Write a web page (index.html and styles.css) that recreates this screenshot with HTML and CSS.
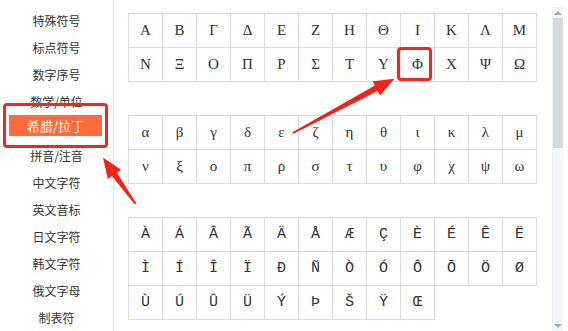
FILE: index.html
```html
<!DOCTYPE html>
<html lang="zh">
<head>
    <meta charset="UTF-8">
    <title>特殊符号</title>
    <link rel="stylesheet" href="styles.css">
</head>
<body>
    <div class="page">
        <ul class="sidebar">
            <li class="item">特殊符号</li>
            <li class="item">标点符号</li>
            <li class="item">数字序号</li>
            <li class="item">数学/单位</li>
            <li class="item active"><span>希腊/拉丁</span></li>
            <li class="item">拼音/注音</li>
            <li class="item">中文字符</li>
            <li class="item">英文音标</li>
            <li class="item">日文字符</li>
            <li class="item">韩文字符</li>
            <li class="item">俄文字母</li>
            <li class="item">制表符</li>
        </ul>

        <div class="main">
            <div class="grid" id="upper"></div>
            <div class="grid" id="lower"></div>
            <div class="grid latin" id="latin"></div>
        </div>

        <div class="scrollbar">
            <div class="sb-up"></div>
            <div class="sb-thumb"></div>
            <div class="sb-track"></div>
            <div class="sb-down"></div>
        </div>

        <!-- 标注 -->
        <div class="mark mark-side"></div>
        <div class="mark mark-phi"></div>
        <svg class="arrows" width="568" height="331" viewBox="0 0 568 331">
            <polygon fill="#f0231c" points="292,132.5 293.5,133.8 377.7,91 380,95.4 394.5,78.8 372.6,81.2 374.9,85.6"/>
            <polygon fill="#f0231c" points="134.8,204.5 136.3,203.3 116.9,172.7 121,169.8 103,157.5 107.8,179 111.9,176.1"/>
        </svg>
    </div>

    <script>
        const sets = {
            upper: 'ΑΒΓΔΕΖΗΘΙΚΛΜΝΞΟΠΡΣΤΥΦΧΨΩ',
            lower: 'αβγδεζηθικλμνξοπρστυφχψω',
            latin: 'ÀÁÂÃÄÅÆÇÈÉÊËÌÍÎÏÐÑÒÓÔÕÖØÙÚÛÜÝÞŠŸŒ'
        };

        for (const id in sets) {
            const grid = document.getElementById(id);
            for (const ch of sets[id]) {
                const cell = document.createElement('div');
                cell.className = 'cell';
                cell.textContent = ch;
                grid.appendChild(cell);
            }
        }
    </script>
</body>
</html>
```

FILE: styles.css
```css
* {
    margin: 0;
    padding: 0;
    box-sizing: border-box;
}

body {
    background: #fff;
    width: 568px;
    height: 331px;
    overflow: hidden;
    font-family: 'Noto Sans CJK SC', sans-serif;
}

.page {
    position: relative;
    display: flex;
    height: 331px;
}

.sidebar {
    list-style: none;
    width: 114px;
    border-right: 1px solid #e1e4e8;
    padding-top: 7px;
}

.item {
    height: 27px;
    display: flex;
    align-items: center;
    justify-content: center;
    font-size: 12px;
    color: #333;
}

.item.active {
    align-items: flex-start;
    padding-left: 9px;
    justify-content: flex-start;
}

.item.active span {
    display: block;
    width: 93px;
    height: 21px;
    line-height: 21px;
    text-align: center;
    background: #ff6b3d;
    color: #fff;
    font-size: 13px;
}

.main {
    flex: 1;
    padding: 13px 0 0 14px;
}

.grid {
    display: grid;
    grid-template-columns: repeat(12, 34px);
    width: 409px;
    border-left: 1px solid #d9dcdf;
    border-top: 1px solid #d9dcdf;
    margin-bottom: 33px;
}

.cell {
    height: 34px;
    border-right: 1px solid #d9dcdf;
    border-bottom: 1px solid #d9dcdf;
    display: flex;
    align-items: center;
    justify-content: center;
    font-family: 'Liberation Serif', 'DejaVu Serif', serif;
    font-size: 15px;
    color: #333;
}

.latin .cell {
    font-family: 'Liberation Mono', monospace;
    font-size: 15px;
}

.scrollbar {
    width: 11px;
    margin: 7px 5px 0 0;
    display: flex;
    flex-direction: column;
    border-left: 1px solid #eef1f4;
}

.sb-up,
.sb-down {
    height: 11px;
    background: #f3f5f8;
    display: flex;
    align-items: center;
    justify-content: center;
}

.sb-up::after {
    content: '';
    border: 4px solid transparent;
    border-bottom: 4px solid #a9aeb4;
    border-top: 0;
}

.sb-down::after {
    content: '';
    border: 4px solid transparent;
    border-top: 4px solid #a9aeb4;
    border-bottom: 0;
}

.sb-thumb {
    height: 130px;
    background: #d5dade;
}

.sb-track {
    flex: 1;
    background: #f4f6f9;
}

.mark {
    position: absolute;
    border: 3px solid #e82a26;
    border-radius: 4px;
}

.mark-side {
    left: 3px;
    top: 103px;
    width: 105px;
    height: 45px;
}

.mark-phi {
    left: 397px;
    top: 47px;
    width: 35px;
    height: 34px;
}

.arrows {
    position: absolute;
    left: 0;
    top: 0;
}
```
